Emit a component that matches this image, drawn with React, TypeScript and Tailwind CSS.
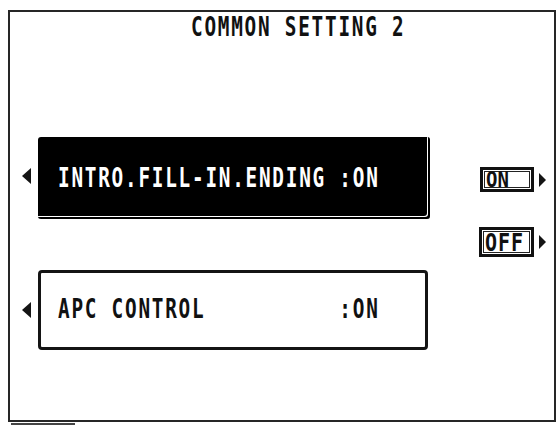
const mono = "font-['DejaVu_Sans_Mono','Liberation_Mono',monospace] font-bold"

function LeftArrow({ className = '' }: { className?: string }) {
  return (
    <svg width="9" height="16" viewBox="0 0 9 16" className={className}>
      <polygon points="9,0 0,8 9,16" fill="#141414" />
    </svg>
  )
}

function RightArrow() {
  return (
    <svg width="7" height="14" viewBox="0 0 7 14">
      <polygon points="0,0 7,7 0,14" fill="#141414" />
    </svg>
  )
}

function LcdText({ text, className = '' }: { text: string; className?: string }) {
  return (
    <span
      className={`${mono} inline-block whitespace-pre text-[22px] leading-[24px] tracking-[1.98px] origin-left scale-x-[0.88] scale-y-[1.19] ${className}`}
    >
      {text}
    </span>
  )
}

function SelectButton({ label, size }: { label: string; size: 'on' | 'off' }) {
  const box = size === 'on' ? 'w-[54px] h-[25px]' : 'w-[55px] h-[30px]'
  const txt =
    size === 'on'
      ? 'text-[19px] leading-[15px] scale-y-[1.1]'
      : 'text-[20px] leading-[20px] tracking-[1px] scale-y-[1.22]'
  return (
    <div className="flex items-center gap-[5px]">
      <div className={`${box} border-[3px] border-[#111] p-[1px] bg-white`}>
        <div className="h-full border border-[#222] flex items-center pl-[1px]">
          <span className={`${mono} inline-block text-[#111] ${txt}`}>{label}</span>
        </div>
      </div>
      <RightArrow />
    </div>
  )
}

export default function App() {
  return (
    <div className="w-[559px] h-[426px] bg-white pt-[10px] pl-[8px] overflow-hidden">
      <div className="w-[548px] h-[412px] border-2 border-[#262626] flex flex-col">
        <div className="pl-[181px] pt-[4px] h-[28px]">
          <LcdText text="COMMON SETTING 2" className="text-[#111]" />
        </div>

        <div className="flex mt-[97px]">
          <div className="flex flex-col pl-[12px]">
            <div className="flex items-center gap-[7px]">
              <LeftArrow className="mb-[5px]" />
              <div className="w-[392px] h-[82px] bg-black rounded-[3px] shadow-[inset_-2px_-2px_0_0_#000,inset_-3px_-3px_0_0_#fff] flex items-center pl-[20px] pt-[2px]">
                <LcdText text="INTRO.FILL-IN.ENDING :ON" className="text-white" />
              </div>
            </div>

            <div className="flex items-center gap-[7px] mt-[51px]">
              <LeftArrow />
              <div className="w-[390px] h-[80px] border-[3px] border-[#141414] rounded-[4px] bg-white flex items-center pl-[17px]">
                <LcdText text="APC CONTROL          :ON" className="text-[#111]" />
              </div>
            </div>
          </div>

          <div className="flex-1 flex flex-col items-end pr-[8px] pt-[30px] gap-[35px]">
            <SelectButton label="ON" size="on" />
            <SelectButton label="OFF" size="off" />
          </div>
        </div>
      </div>
      <div className="mt-[1px] ml-[3px] w-[64px] h-[2px] bg-[#444]" />
    </div>
  )
}
